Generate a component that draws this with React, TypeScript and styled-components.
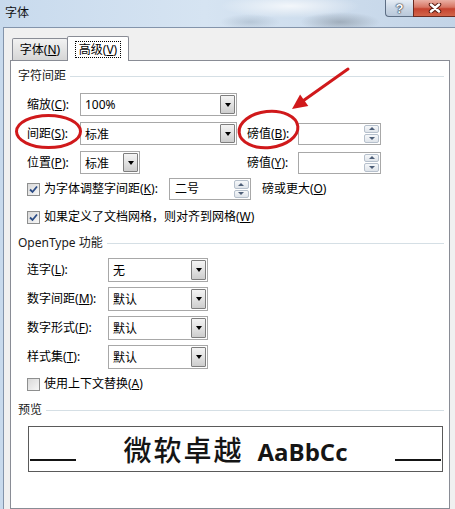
import { ReactNode } from "react";
import styled, { createGlobalStyle } from "styled-components";

const GlobalStyle = createGlobalStyle`
  html,
  body {
    margin: 0;
    padding: 0;
    background: #cddcec;
  }

  body {
    font-family: "Noto Sans", "Noto Sans CJK SC", sans-serif;
    font-size: 12px;
    color: #000;
  }
`;

const Window = styled.div`
  position: relative;
  display: flex;
  flex-direction: column;
  width: 455px;
  height: 509px;
  overflow: hidden;
  background:
    radial-gradient(ellipse 70px 12px at 290px 6px, rgba(255, 255, 255, 0.75), transparent),
    radial-gradient(ellipse 40px 10px at 340px 22px, rgba(80, 90, 100, 0.35), transparent),
    radial-gradient(ellipse 30px 8px at 250px 22px, rgba(120, 140, 160, 0.3), transparent),
    linear-gradient(90deg, #c8daed 0%, #d6e4f2 45%, #c3d4e7 100%);
`;

const TitleBar = styled.div`
  display: flex;
  justify-content: space-between;
  align-items: flex-start;
  flex-shrink: 0;
  height: 27px;
`;

const Title = styled.div`
  padding: 5px 0 0 5px;
  line-height: 16px;
  color: #111;
`;

const CaptionButtons = styled.div`
  display: flex;
  height: 17px;
`;

const HelpButton = styled.div`
  display: flex;
  align-items: center;
  justify-content: center;
  box-sizing: border-box;
  width: 28px;
  height: 17px;
  border: 1px solid #5d6e84;
  border-top: none;
  border-right: none;
  border-bottom-left-radius: 4px;
  background: linear-gradient(#e6edf5, #cbd7e5 50%, #b9c8da);
  color: #fff;
  font-family: "Liberation Sans", sans-serif;
  font-size: 13px;
  font-weight: 700;
  text-shadow: 0 0 1px #2c3645, 0 0 1px #2c3645, 0 0 2px #2c3645;
`;

const CloseButton = styled.div`
  display: flex;
  align-items: center;
  justify-content: center;
  box-sizing: border-box;
  width: 42px;
  height: 17px;
  border-left: 1px solid #6b2a20;
  border-bottom: 1px solid #6b2a20;
  background: linear-gradient(#eab0a4, #d77563 45%, #c5432f 55%, #d2654a);
`;

const Body = styled.div`
  display: flex;
  flex-direction: column;
  flex: 1;
  margin-left: 3px;
  padding-top: 8px;
  border-top: 1px solid #8394ab;
  border-left: 1px solid #8394ab;
  background: #f0f0f0;
`;

const TabStrip = styled.div`
  position: relative;
  z-index: 1;
  display: flex;
  align-items: flex-end;
  height: 24px;
  padding-left: 8px;
`;

const Tab = styled.div<{ $active?: boolean }>`
  display: flex;
  justify-content: center;
  box-sizing: border-box;
  width: ${(p) => (p.$active ? 62 : 56)}px;
  height: ${(p) => (p.$active ? 25 : 22)}px;
  margin-left: ${(p) => (p.$active ? -1 : 0)}px;
  margin-bottom: ${(p) => (p.$active ? -1 : 0)}px;
  padding-top: ${(p) => (p.$active ? 4 : 3)}px;
  border: 1px solid #898c95;
  border-bottom: none;
  border-radius: 2px 2px 0 0;
  background: ${(p) => (p.$active ? "#fff" : "linear-gradient(#f2f2f2, #e4e4e4 50%, #d6d6d6)")};
  line-height: 15px;
`;

const FocusRect = styled.span`
  height: 15px;
  padding: 0 3px;
  border: 1px dotted #000;
`;

const TabPanel = styled.div`
  flex: 1;
  box-sizing: border-box;
  width: 440px;
  margin-left: 6px;
  padding: 7px 5px 0 7px;
  border: 1px solid #898c95;
  background: #fff;
`;

const SectionHeader = styled.div<{ $mt?: number }>`
  display: flex;
  align-items: center;
  gap: 4px;
  height: 16px;
  margin-top: ${(p) => p.$mt ?? 0}px;
  line-height: 16px;
  color: #1a1a1a;

  &::after {
    content: "";
    flex: 1;
    height: 1px;
    background: #d5dfe5;
  }
`;

const FieldStack = styled.div<{ $mt: number; $gap: number }>`
  display: flex;
  flex-direction: column;
  gap: ${(p) => p.$gap}px;
  margin-top: ${(p) => p.$mt}px;
  padding-left: 9px;
`;

const FieldRow = styled.div<{ $h: number }>`
  display: flex;
  align-items: center;
  height: ${(p) => p.$h}px;
`;

const FieldLabel = styled.span<{ $w: number; $ml?: number }>`
  flex-shrink: 0;
  width: ${(p) => p.$w}px;
  margin-left: ${(p) => p.$ml ?? 0}px;
  line-height: 16px;
  white-space: nowrap;
`;

const ComboBox = styled.div<{ $w: number }>`
  display: flex;
  align-items: stretch;
  box-sizing: border-box;
  width: ${(p) => p.$w}px;
  height: 100%;
  padding: 1px;
  border: 1px solid #a8a8a8;
  background: #fff;
`;

const ComboValue = styled.span`
  display: flex;
  align-items: center;
  flex: 1;
  padding-left: 3px;
`;

const ComboArrow = styled.span`
  display: flex;
  align-items: center;
  justify-content: center;
  box-sizing: border-box;
  width: 15px;
  border: 1px solid #7e7e7e;
  border-radius: 1px;
  background: linear-gradient(#f4f4f4, #e2e2e2 50%, #cdcdcd);

  &::after {
    content: "";
    border-left: 3.5px solid transparent;
    border-right: 3.5px solid transparent;
    border-top: 4px solid #000;
  }
`;

const SpinBox = styled.div<{ $w: number; $ml?: number }>`
  display: flex;
  flex-shrink: 0;
  box-sizing: border-box;
  width: ${(p) => p.$w}px;
  height: 22px;
  margin-left: ${(p) => p.$ml ?? 0}px;
  padding: 1px;
  border: 1px solid #a8a8a8;
  background: #fff;
`;

const SpinValue = styled.span`
  display: flex;
  align-items: center;
  flex: 1;
  padding-left: 4px;
`;

const SpinButtons = styled.span`
  display: flex;
  flex-direction: column;
  gap: 1px;
  width: 15px;
`;

const SpinButton = styled.span<{ $dir: "up" | "down" }>`
  display: flex;
  align-items: center;
  justify-content: center;
  flex: 1;
  border: 1px solid #b6c0cc;
  border-radius: 2px;
  background: linear-gradient(#f6f8fa, #dfe4ea);

  &::after {
    content: "";
    border-left: 3px solid transparent;
    border-right: 3px solid transparent;
    ${(p) => (p.$dir === "up" ? "border-bottom: 3px solid #4e5f78;" : "border-top: 3px solid #4e5f78;")}
  }
`;

const CheckRow = styled.div<{ $mt: number; $h: number }>`
  display: flex;
  align-items: center;
  gap: 4px;
  height: ${(p) => p.$h}px;
  margin-top: ${(p) => p.$mt}px;
  padding-left: 9px;
  line-height: 16px;
  white-space: nowrap;
`;

const CheckBox = styled.span`
  display: flex;
  align-items: center;
  justify-content: center;
  flex-shrink: 0;
  box-sizing: border-box;
  width: 13px;
  height: 13px;
  border: 1px solid #8e8f8f;
  background: linear-gradient(135deg, #d9d9d9, #f7f7f7);
`;

const TrailingText = styled.span`
  margin-left: 7px;
`;

const PreviewBox = styled.div`
  display: flex;
  justify-content: space-between;
  align-items: center;
  box-sizing: border-box;
  height: 46px;
  margin: 8px 1px 0 10px;
  padding: 0 1px;
  border: 1px solid #5a5a5a;
`;

const BaseLine = styled.span`
  align-self: flex-end;
  width: 46px;
  height: 2px;
  margin-bottom: 10px;
  background: #151515;
`;

const PreviewText = styled.div`
  display: flex;
  align-items: baseline;
  gap: 14px;
  color: #151515;
`;

const PreviewCjk = styled.span`
  font-family: "Noto Sans CJK SC", sans-serif;
  font-size: 28px;
  font-weight: 500;
  letter-spacing: 2px;
  line-height: 1;
`;

const PreviewLatin = styled.span`
  font-family: "Open Sans", "Noto Sans", sans-serif;
  font-size: 24px;
  font-weight: 700;
  line-height: 1;
`;

const Annotations = styled.svg`
  position: absolute;
  top: 0;
  left: 0;
  pointer-events: none;
`;

function Combo({ width, value }: { width: number; value: string }) {
  return (
    <ComboBox $w={width}>
      <ComboValue>{value}</ComboValue>
      <ComboArrow />
    </ComboBox>
  );
}

function Spin({ width, value, ml }: { width: number; value?: string; ml?: number }) {
  return (
    <SpinBox $w={width} $ml={ml}>
      <SpinValue>{value}</SpinValue>
      <SpinButtons>
        <SpinButton $dir="up" />
        <SpinButton $dir="down" />
      </SpinButtons>
    </SpinBox>
  );
}

function Check({ checked }: { checked?: boolean }) {
  return (
    <CheckBox>
      {checked && (
        <svg width="9" height="9" viewBox="0 0 9 9">
          <path d="M1 4.5 L3.5 7 L8 1.5" fill="none" stroke="#2b4c86" strokeWidth="1.8" />
        </svg>
      )}
    </CheckBox>
  );
}

function Key({ children }: { children: ReactNode }) {
  return <u>{children}</u>;
}

const otRows = [
  { label: "连字", key: "L", value: "无" },
  { label: "数字间距", key: "M", value: "默认" },
  { label: "数字形式", key: "F", value: "默认" },
  { label: "样式集", key: "T", value: "默认" },
];

export default function App() {
  return (
    <Window>
      <GlobalStyle />
      <TitleBar>
        <Title>字体</Title>
        <CaptionButtons>
          <HelpButton>?</HelpButton>
          <CloseButton>
            <svg width="14" height="10" viewBox="0 0 14 10">
              <path d="M3 1.5 L11 8.5 M11 1.5 L3 8.5" stroke="#5a1c12" strokeWidth="4.5" strokeLinecap="round" />
              <path d="M3 1.5 L11 8.5 M11 1.5 L3 8.5" stroke="#fff" strokeWidth="2.5" strokeLinecap="round" />
            </svg>
          </CloseButton>
        </CaptionButtons>
      </TitleBar>

      <Body>
        <TabStrip>
          <Tab>
            <span>
              字体(<Key>N</Key>)
            </span>
          </Tab>
          <Tab $active>
            <FocusRect>
              高级(<Key>V</Key>)
            </FocusRect>
          </Tab>
        </TabStrip>

        <TabPanel>
          <SectionHeader>字符间距</SectionHeader>
          <FieldStack $mt={9} $gap={6}>
            <FieldRow $h={23}>
              <FieldLabel $w={53}>
                缩放(<Key>C</Key>):
              </FieldLabel>
              <Combo width={157} value="100%" />
            </FieldRow>
            <FieldRow $h={23}>
              <FieldLabel $w={53}>
                间距(<Key>S</Key>):
              </FieldLabel>
              <Combo width={157} value="标准" />
              <FieldLabel $w={51} $ml={10}>
                磅值(<Key>B</Key>):
              </FieldLabel>
              <Spin width={83} />
            </FieldRow>
            <FieldRow $h={23}>
              <FieldLabel $w={53}>
                位置(<Key>P</Key>):
              </FieldLabel>
              <Combo width={60} value="标准" />
              <FieldLabel $w={51} $ml={107}>
                磅值(<Key>Y</Key>):
              </FieldLabel>
              <Spin width={83} />
            </FieldRow>
          </FieldStack>

          <CheckRow $mt={4} $h={22}>
            <Check checked />
            <span>
              为字体调整字间距(<Key>K</Key>):
            </span>
            <Spin width={82} value="二号" ml={7} />
            <TrailingText>
              磅或更大(<Key>O</Key>)
            </TrailingText>
          </CheckRow>
          <CheckRow $mt={9} $h={16}>
            <Check checked />
            <span>
              如果定义了文档网格，则对齐到网格(<Key>W</Key>)
            </span>
          </CheckRow>

          <SectionHeader $mt={10}>OpenType 功能</SectionHeader>
          <FieldStack $mt={7} $gap={5}>
            {otRows.map((row) => (
              <FieldRow $h={24} key={row.key}>
                <FieldLabel $w={81}>
                  {row.label}(<Key>{row.key}</Key>):
                </FieldLabel>
                <Combo width={100} value={row.value} />
              </FieldRow>
            ))}
          </FieldStack>
          <CheckRow $mt={7} $h={16}>
            <Check />
            <span>
              使用上下文替换(<Key>A</Key>)
            </span>
          </CheckRow>

          <SectionHeader $mt={10}>预览</SectionHeader>
          <PreviewBox>
            <BaseLine />
            <PreviewText>
              <PreviewCjk>微软卓越</PreviewCjk>
              <PreviewLatin>AaBbCc</PreviewLatin>
            </PreviewText>
            <BaseLine />
          </PreviewBox>
        </TabPanel>
      </Body>

      <Annotations width="455" height="509" viewBox="0 0 455 509">
        <g fill="none" stroke="#d0191b" strokeWidth="3">
          <ellipse cx="48.5" cy="131.5" rx="32" ry="16" />
          <ellipse cx="268.5" cy="129.5" rx="29.5" ry="18" transform="rotate(-6 268.5 129.5)" />
          <path d="M348 69 L300 103" strokeLinecap="round" />
        </g>
        <path d="M292 109 L308.3 106 L300.1 94.6 Z" fill="#d0191b" />
      </Annotations>
    </Window>
  );
}
